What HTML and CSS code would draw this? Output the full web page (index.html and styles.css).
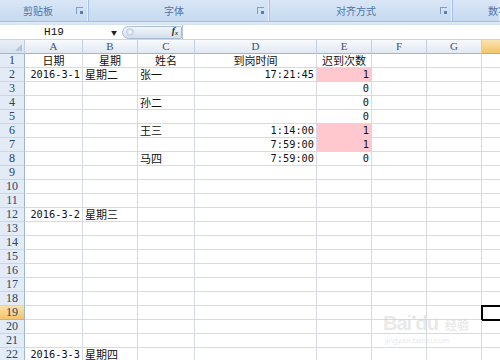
FILE: index.html
```html
<!DOCTYPE html>
<html lang="zh-CN">
<head>
<meta charset="utf-8">
<title>Sheet</title>
<link rel="stylesheet" href="styles.css">
</head>
<body>
<div class="ribbon">
  <div class="grp g1"><span class="lbl">剪贴板</span><span class="ln"></span></div>
  <div class="grp g2"><span class="lbl">字体</span><span class="ln"></span></div>
  <div class="grp g3"><span class="lbl">对齐方式</span><span class="ln"></span></div>
  <div class="grp g4"><span class="lbl">数字</span></div>
</div>
<div class="strip"></div>
<div class="fbar">
  <div class="namebox"><span class="nm">H19</span><span class="dd">▼</span></div>
  <div class="pill"><span class="dot"></span><span class="fx">f<sub>x</sub></span></div>
  <div class="input"></div>
</div>
<div class="sheet">
  <div class="r hd"><span class="corner"></span><span>A</span><span>B</span><span>C</span><span>D</span><span>E</span><span>F</span><span>G</span><span class="on">H</span></div>
  <div class="r"><span class="h">1</span><span class="ct">日期</span><span class="ct">星期</span><span class="ct">姓名</span><span class="ct">到岗时间</span><span class="ct">迟到次数</span><span></span><span></span><span></span></div>
  <div class="r"><span class="h">2</span><span class="n">2016-3-1</span><span>星期二</span><span>张一</span><span class="n">17:21:45</span><span class="n pk">1</span><span></span><span></span><span></span></div>
  <div class="r"><span class="h">3</span><span></span><span></span><span></span><span></span><span class="n">0</span><span></span><span></span><span></span></div>
  <div class="r"><span class="h">4</span><span></span><span></span><span>孙二</span><span></span><span class="n">0</span><span></span><span></span><span></span></div>
  <div class="r"><span class="h">5</span><span></span><span></span><span></span><span></span><span class="n">0</span><span></span><span></span><span></span></div>
  <div class="r"><span class="h">6</span><span></span><span></span><span>王三</span><span class="n">1:14:00</span><span class="n pk">1</span><span></span><span></span><span></span></div>
  <div class="r"><span class="h">7</span><span></span><span></span><span></span><span class="n">7:59:00</span><span class="n pk">1</span><span></span><span></span><span></span></div>
  <div class="r"><span class="h">8</span><span></span><span></span><span>马四</span><span class="n">7:59:00</span><span class="n">0</span><span></span><span></span><span></span></div>
  <div class="r"><span class="h">9</span><span></span><span></span><span></span><span></span><span></span><span></span><span></span><span></span></div>
  <div class="r"><span class="h">10</span><span></span><span></span><span></span><span></span><span></span><span></span><span></span><span></span></div>
  <div class="r"><span class="h">11</span><span></span><span></span><span></span><span></span><span></span><span></span><span></span><span></span></div>
  <div class="r"><span class="h">12</span><span class="n">2016-3-2</span><span>星期三</span><span></span><span></span><span></span><span></span><span></span><span></span></div>
  <div class="r"><span class="h">13</span><span></span><span></span><span></span><span></span><span></span><span></span><span></span><span></span></div>
  <div class="r"><span class="h">14</span><span></span><span></span><span></span><span></span><span></span><span></span><span></span><span></span></div>
  <div class="r"><span class="h">15</span><span></span><span></span><span></span><span></span><span></span><span></span><span></span><span></span></div>
  <div class="r"><span class="h">16</span><span></span><span></span><span></span><span></span><span></span><span></span><span></span><span></span></div>
  <div class="r"><span class="h">17</span><span></span><span></span><span></span><span></span><span></span><span></span><span></span><span></span></div>
  <div class="r"><span class="h">18</span><span></span><span></span><span></span><span></span><span></span><span></span><span></span><span></span></div>
  <div class="r"><span class="h on">19</span><span></span><span></span><span></span><span></span><span></span><span></span><span></span><span class="sel"></span></div>
  <div class="r"><span class="h">20</span><span></span><span></span><span></span><span></span><span></span><span></span><span></span><span></span></div>
  <div class="r"><span class="h">21</span><span></span><span></span><span></span><span></span><span></span><span></span><span></span><span></span></div>
  <div class="r"><span class="h">22</span><span class="n">2016-3-3</span><span>星期四</span><span></span><span></span><span></span><span></span><span></span><span></span></div>
</div>
<div class="wm"><span class="wm1">Bai<span class="paw">●</span>du</span><span class="wm2">经验</span><span class="wm3">jingyan.baidu.com</span></div>
</body>
</html>
```
FILE: styles.css
```css
html, body { margin: 0; padding: 0; }
body {
  width: 500px;
  height: 360px;
  overflow: hidden;
  position: relative;
  background: #fff;
  font-family: "Noto Sans CJK SC", sans-serif;
}

/* ribbon group labels */
.ribbon {
  height: 21px;
  display: flex;
  background: linear-gradient(#d9e6f6, #c6daf1);
  border-bottom: 1px solid #a3bfe3;
}
.grp {
  display: flex;
  align-items: center;
  box-sizing: border-box;
  border-right: 1px solid #a7c1e4;
  box-shadow: inset -1px 0 0 #e6eefa;
}
.g1 { width: 89px; }
.g2 { width: 179px; margin-left: 2px; }
.g3 { width: 181px; margin-left: 2px; }
.g4 { flex: 1; margin-left: 2px; border-right: 0; overflow: hidden; }
.lbl {
  flex: 1;
  text-align: center;
  font-size: 10px;
  color: #4f73a8;
  line-height: 21px;
  white-space: nowrap;
}
.g4 .lbl { text-align: left; padding-left: 33px; }
.ln {
  width: 7px;
  height: 7px;
  margin-right: 5px;
  box-sizing: border-box;
  border: 1px solid #7f9cc7;
  border-width: 1px 0 0 1px;
  position: relative;
}
.ln::after {
  content: "";
  position: absolute;
  right: 0;
  bottom: 0;
  width: 3px;
  height: 3px;
  background: #5a7db3;
}

.strip {
  height: 3px;
  background: linear-gradient(#e3edf8, #d2e0f2);
}

/* formula bar */
.fbar {
  height: 15px;
  display: flex;
  align-items: center;
  background: #fff;
  border-bottom: 1px solid #c9d6e7;
  box-sizing: border-box;
}
.namebox {
  width: 120px;
  display: flex;
  align-items: center;
  height: 100%;
}
.nm {
  flex: 1;
  text-align: center;
  font-family: "Liberation Mono", monospace;
  font-size: 11px;
  color: #111;
}
.dd {
  width: 12px;
  font-size: 6px;
  color: #222;
  text-align: center;
}
.pill {
  width: 60px;
  height: 13px;
  margin-left: 2px;
  box-sizing: border-box;
  border: 1px solid #a9bcd6;
  border-radius: 7px 2px 2px 7px;
  background: linear-gradient(#f3f6fb, #d3deec);
  display: flex;
  align-items: center;
  justify-content: space-between;
  padding: 0 3px 0 3px;
}
.dot {
  width: 6px;
  height: 6px;
  border-radius: 50%;
  background: radial-gradient(#ffffff, #b8c8de);
  border: 1px solid #c4d2e5;
}
.fx {
  font-family: "Liberation Serif", serif;
  font-style: italic;
  font-weight: bold;
  font-size: 10px;
  color: #333;
  line-height: 11px;
}
.fx sub { font-size: 6px; vertical-align: -1px; }
.input {
  flex: 1;
  height: 100%;
  border-left: 1px solid #b4c6dd;
  background: #fff;
}

/* sheet */
.sheet {
  width: 500px;
  overflow: hidden;
}
.r {
  display: grid;
  grid-template-columns: 25px 58px 55px 57px 122px 55px 55px 55px 60px;
  height: 14px;
}
.r > span {
  box-sizing: border-box;
  border-right: 1px solid #d4dbe7;
  border-bottom: 1px solid #d4dbe7;
  font-size: 11px;
  line-height: 13px;
  padding: 0 2px;
  white-space: nowrap;
  color: #111;
}
.r > .ct { text-align: center; padding: 0; }
.r > .n {
  text-align: right;
  font-family: "DejaVu Sans Mono", monospace;
  font-size: 10.3px;
  padding-right: 2px;
}
.r > .pk { background: #ffc7ce; border-bottom-color: #ffc7ce; }

.hd > span {
  background: linear-gradient(#f8fafd, #e2e9f3);
  border-right-color: #c3d0e2;
  border-bottom-color: #9eb6ce;
  text-align: center;
  font-family: "Liberation Serif", serif;
  font-size: 11px;
  color: #3a5275;
}
.hd > .on {
  background: linear-gradient(#fbe3b0, #f3c46c);
  border-bottom-color: #e0a84a;
}
.hd > .corner {
  position: relative;
  background: linear-gradient(#e9eff7, #d6e1ef);
}
.corner::after {
  content: "";
  position: absolute;
  right: 2px;
  bottom: 2px;
  border-style: solid;
  border-width: 0 0 7px 7px;
  border-color: transparent transparent #b4c5dc transparent;
}
.r > .h {
  background: #e3ebf6;
  border-right-color: #9eb6ce;
  border-bottom-color: #c9d6e8;
  text-align: center;
  padding: 0;
  font-family: "Liberation Serif", serif;
  font-size: 12px;
  color: #2a4468;
}
.r > .h.on {
  background: linear-gradient(#fbe0a8, #f4c46a);
  border-bottom-color: #e2ad55;
}
.r > .sel {
  outline: 2px solid #000;
  outline-offset: -1px;
}

/* watermark */
.wm {
  position: absolute;
  left: 383px;
  top: 304px;
  width: 100px;
  height: 44px;
  color: rgba(205, 205, 205, 0.45);
  font-family: "Liberation Sans", sans-serif;
  pointer-events: none;
}
.wm1 {
  position: absolute;
  left: 0;
  top: 8px;
  font-size: 20px;
  font-weight: bold;
  letter-spacing: -1px;
}
.paw { font-size: 9px; vertical-align: 10px; }
.wm2 {
  position: absolute;
  left: 62px;
  top: 12px;
  font-size: 12px;
  font-family: "Noto Sans CJK SC", sans-serif;
  font-weight: bold;
}
.wm3 {
  position: absolute;
  left: 2px;
  top: 32px;
  font-size: 8px;
}
```
